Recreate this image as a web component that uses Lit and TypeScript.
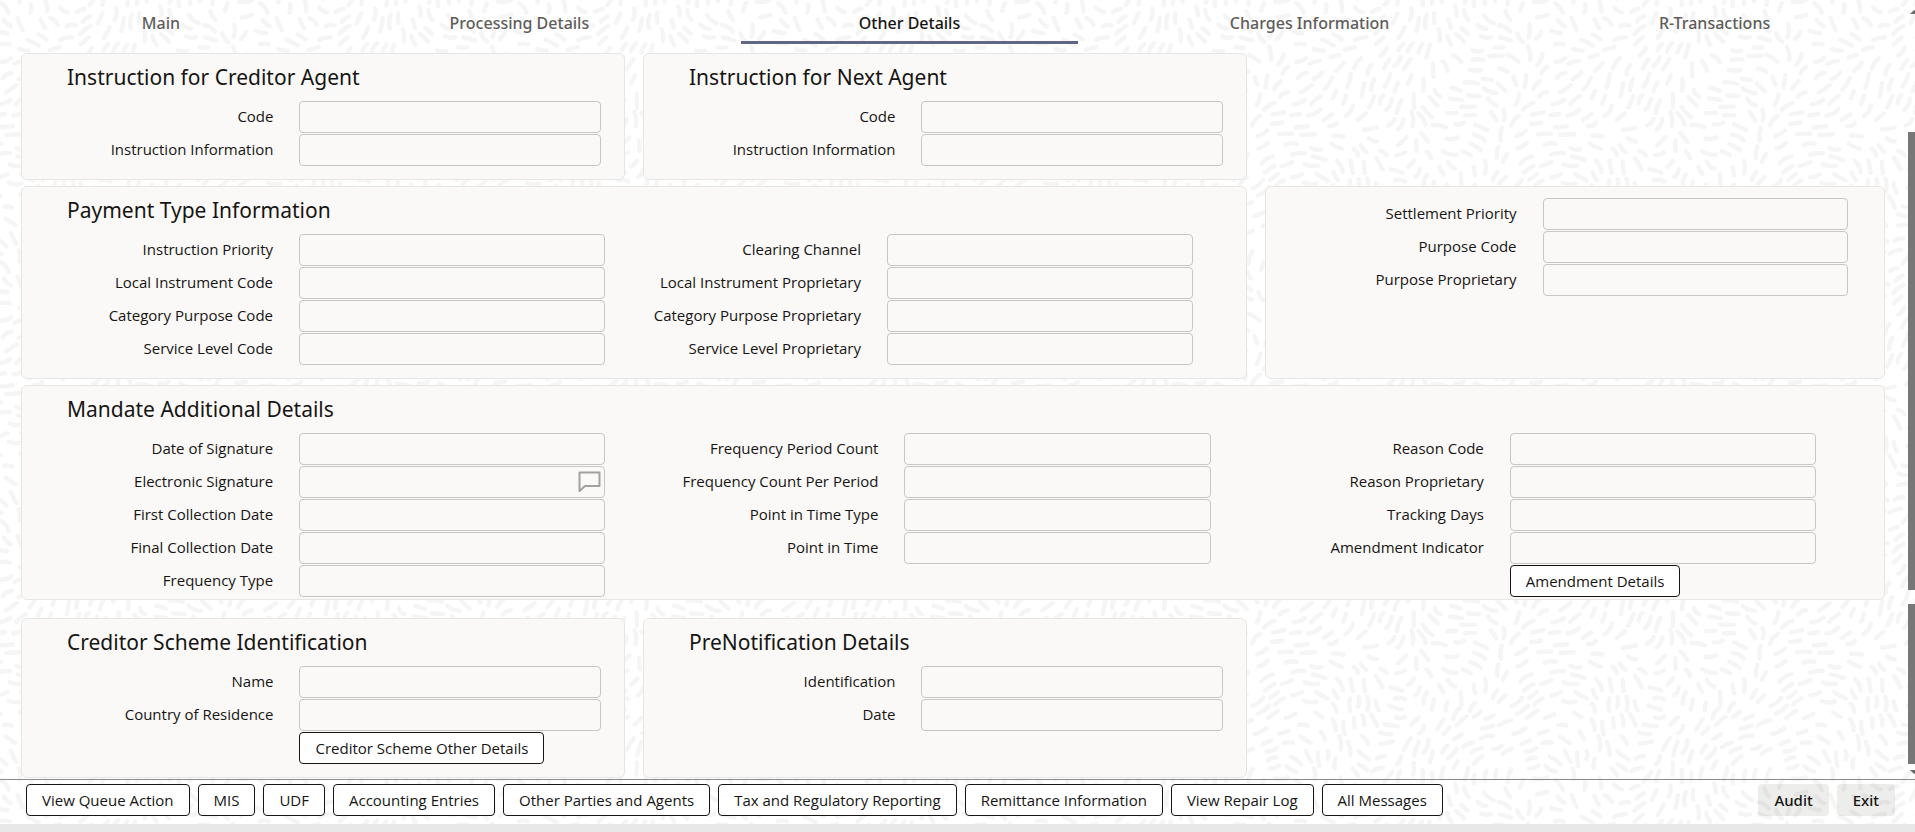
import { LitElement, html, css, unsafeCSS, nothing } from 'lit';
import { customElement, property, state } from 'lit/decorators.js';

/* Seamless tile of short brush strokes that follow a periodic flow field. */
function strokeTile(size: number): string {
  let seed = 1207;
  const rnd = () => {
    seed = (seed * 1664525 + 1013904223) >>> 0;
    return seed / 4294967296;
  };
  const k = (2 * Math.PI) / size;
  const angle = (x: number, y: number) =>
    -0.8 + 1.3 * Math.sin(k * x + 0.6) + 0.8 * Math.cos(k * y + 1.1) + 0.6 * Math.sin(k * (2 * x + y)) + 0.4 * Math.cos(k * (x - 2 * y));
  const wrap = (d: number) => d - size * Math.round(d / size);
  const placed: { x: number; y: number; a: number }[] = [];
  for (let i = 0; i < 24000; i++) {
    const x = rnd() * size;
    const y = rnd() * size;
    const a = angle(x, y);
    const clear = placed.every((p) => {
      const dx = wrap(x - p.x);
      const dy = wrap(y - p.y);
      return [a, p.a].every((t) => {
        const u = (dx * Math.cos(t) + dy * Math.sin(t)) / 18;
        const v = (-dx * Math.sin(t) + dy * Math.cos(t)) / 8;
        return u * u + v * v > 1;
      });
    });
    if (clear) placed.push({ x, y, a });
  }
  let d = '';
  for (const p of placed) {
    const len = 4 + rnd() * 3;
    const bend = (rnd() - 0.5) * 5;
    const c = Math.cos(p.a);
    const s = Math.sin(p.a);
    for (const ox of [-size, 0, size]) {
      for (const oy of [-size, 0, size]) {
        const x = p.x + ox;
        const y = p.y + oy;
        if (x < -12 || y < -12 || x > size + 12 || y > size + 12) continue;
        d += `M${(x - c * len).toFixed(1)} ${(y - s * len).toFixed(1)}Q${(x - s * bend).toFixed(1)} ${(y + c * bend).toFixed(1)} ${(x + c * len).toFixed(1)} ${(y + s * len).toFixed(1)}`;
      }
    }
  }
  const svg = `<svg xmlns="http://www.w3.org/2000/svg" width="${size}" height="${size}"><path d="${d}" fill="none" stroke="#f5f5f5" stroke-width="4.4" stroke-linecap="round"/></svg>`;
  return `url("data:image/svg+xml,${encodeURIComponent(svg)}")`;
}

const controls = css`
  button {
    font: 400 15px/20px 'Open Sans', 'Noto Sans', sans-serif;
    color: #161513;
    height: 32px;
    padding: 0 15px;
    border: 1px solid #161513;
    border-radius: 4px;
    background: #fff;
    white-space: nowrap;
    cursor: pointer;
  }
`;

interface Field {
  label: string;
  note?: boolean;
}

@customElement('field-column')
class FieldColumn extends LitElement {
  @property({ attribute: false }) fields: Field[] = [];
  @property() action = '';

  static styles = [
    controls,
    css`
      :host {
        display: flex;
        flex-direction: column;
        gap: 1px;
        min-width: 0;
      }
      .row {
        display: grid;
        grid-template-columns: minmax(0, 251fr) minmax(0, var(--input-share, 306fr));
        column-gap: 26px;
        align-items: center;
      }
      label {
        padding-bottom: 2px;
        font: 400 15px/20px 'Open Sans', 'Noto Sans', sans-serif;
        color: #161513;
        text-align: right;
        white-space: nowrap;
        justify-self: end;
      }
      .box {
        position: relative;
        display: flex;
      }
      input {
        box-sizing: border-box;
        width: 100%;
        height: 32px;
        padding: 0 12px;
        border: 1px solid #c8c7c5;
        border-radius: 4px;
        background: transparent;
        font: 400 15px/20px 'Open Sans', 'Noto Sans', sans-serif;
        color: #161513;
      }
      .note {
        position: absolute;
        top: 4px;
        right: 4px;
        width: 24px;
        height: 24px;
        padding: 0;
        border: 0;
        background: none;
      }
      .note svg {
        display: block;
      }
      .row > button {
        grid-column: 2;
        justify-self: start;
      }
    `,
  ];

  render() {
    return html`
      ${this.fields.map(
        (f, i) => html`
          <div class="row">
            <label for="f${i}">${f.label}</label>
            <div class="box">
              <input id="f${i}" type="text" />
              ${f.note
                ? html`<button class="note" aria-label="Open note">
                    <svg width="24" height="24" viewBox="0 0 24 24" fill="none" stroke="#a3a09d" stroke-width="2" stroke-linejoin="round">
                      <path d="M2.5 2.5h20v13.5h-14.500l-5.500 5z" />
                    </svg>
                  </button>`
                : nothing}
            </div>
          </div>
        `,
      )}
      ${this.action ? html`<div class="row"><button>${this.action}</button></div>` : nothing}
    `;
  }
}

const list = (...labels: string[]): Field[] => labels.map((label) => ({ label }));

@customElement('app-root')
class AppRoot extends LitElement {
  @state() private tab = 'Other Details';

  private tabs = ['Main', 'Processing Details', 'Other Details', 'Charges Information', 'R-Transactions'];
  private links = [
    'View Queue Action',
    'MIS',
    'UDF',
    'Accounting Entries',
    'Other Parties and Agents',
    'Tax and Regulatory Reporting',
    'Remittance Information',
    'View Repair Log',
    'All Messages',
  ];

  static styles = [
    controls,
    css`
      :host {
        display: flex;
        flex-direction: column;
        min-height: 100vh;
        font-family: 'Open Sans', 'Noto Sans', sans-serif;
        color: #161513;
        background: #fff ${unsafeCSS(strokeTile(259))};
      }
      .body {
        flex: 1;
        display: flex;
      }
      .content {
        flex: 1;
        min-width: 0;
      }
      .tabs {
        display: flex;
        gap: 34px;
        padding: 0 20px 0 24px;
        margin-bottom: 9px;
      }
      .tab {
        flex: 1 1 auto;
        height: auto;
        padding: 5px 0 0;
        border: 0;
        border-bottom: 3px solid transparent;
        border-radius: 0;
        background: none;
        font: 500 16px/36px 'Noto Sans', sans-serif;
        color: #5f5d5a;
      }
      .tab[aria-selected='true'] {
        color: #161513;
        border-bottom-color: #5f6785;
      }
      .grid {
        display: grid;
        grid-template-columns: 604fr 604fr 620fr;
        gap: 6px 18px;
        padding: 0 23px 1px 21px;
      }
      .card {
        --input-share: 301fr;
        padding: 9px 23px 13px 0;
        border: 1px solid #e8e6e4;
        border-radius: 6px;
        background: #fbf9f8;
      }
      .half,
      .side,
      .full {
        --input-share: 306fr;
      }
      .half {
        grid-column: 1 / span 2;
        padding-right: 48px;
      }
      .side {
        padding: 11px 36px 13px 0;
      }
      .full {
        grid-column: 1 / -1;
        padding-right: 46px;
        padding-bottom: 2px;
      }
      .start {
        grid-column: 1;
      }
      .last {
        margin-top: 12px;
      }
      h2 {
        margin: 0 0 10px;
        padding-left: 45px;
        font: 400 21px/28px 'Noto Sans', sans-serif;
      }
      .cols {
        display: grid;
      }
      .two {
        grid-template-columns: repeat(2, minmax(0, 1fr));
      }
      .two field-column {
        padding-right: 5px;
      }
      .three {
        grid-template-columns: repeat(3, minmax(0, 1fr));
      }
      .three field-column {
        padding-right: 22px;
      }
      .rail {
        width: 7px;
        display: flex;
        flex-direction: column;
        overflow: hidden;
      }
      .arrow {
        flex: none;
        width: 0;
        margin-left: 2px;
        border: solid transparent;
        border-width: 0 4px;
      }
      .up {
        margin-top: 10px;
        margin-bottom: 118px;
        border-bottom: 4px solid #6b6b6b;
      }
      .down {
        margin-top: 6px;
        margin-bottom: 5px;
        border-top: 4px solid #6b6b6b;
      }
      .thumb {
        flex: 459 1 0;
        background: #777;
      }
      .thumb + .thumb {
        flex-grow: 160;
        margin-top: 14px;
      }
      footer {
        display: flex;
        gap: 8px;
        padding: 4px 20px 8px 26px;
        border-top: 1px solid #8b8b8b;
        border-bottom: 8px solid #e8e8e8;
      }
      .plain {
        border-color: transparent;
        background: rgba(22, 21, 19, 0.08) border-box;
        font-family: 'Noto Sans', sans-serif;
        font-weight: 500;
      }
      .push {
        margin-left: auto;
      }
    `,
  ];

  render() {
    return html`
      <div class="body">
        <div class="content">
          <nav class="tabs" role="tablist">
            ${this.tabs.map(
              (t) => html`<button class="tab" role="tab" aria-selected=${this.tab === t ? 'true' : 'false'} @click=${() => (this.tab = t)}>${t}</button>`,
            )}
          </nav>
          <main class="grid">
            <section class="card">
              <h2>Instruction for Creditor Agent</h2>
              <field-column .fields=${list('Code', 'Instruction Information')}></field-column>
            </section>
            <section class="card">
              <h2>Instruction for Next Agent</h2>
              <field-column .fields=${list('Code', 'Instruction Information')}></field-column>
            </section>
            <section class="card half">
              <h2>Payment Type Information</h2>
              <div class="cols two">
                <field-column
                  .fields=${list('Instruction Priority', 'Local Instrument Code', 'Category Purpose Code', 'Service Level Code')}
                ></field-column>
                <field-column
                  .fields=${list('Clearing Channel', 'Local Instrument Proprietary', 'Category Purpose Proprietary', 'Service Level Proprietary')}
                ></field-column>
              </div>
            </section>
            <section class="card side">
              <field-column .fields=${list('Settlement Priority', 'Purpose Code', 'Purpose Proprietary')}></field-column>
            </section>
            <section class="card full">
              <h2>Mandate Additional Details</h2>
              <div class="cols three">
                <field-column
                  .fields=${[
                    { label: 'Date of Signature' },
                    { label: 'Electronic Signature', note: true },
                    ...list('First Collection Date', 'Final Collection Date', 'Frequency Type'),
                  ]}
                ></field-column>
                <field-column
                  .fields=${list('Frequency Period Count', 'Frequency Count Per Period', 'Point in Time Type', 'Point in Time')}
                ></field-column>
                <field-column
                  .fields=${list('Reason Code', 'Reason Proprietary', 'Tracking Days', 'Amendment Indicator')}
                  action="Amendment Details"
                ></field-column>
              </div>
            </section>
            <section class="card start last">
              <h2>Creditor Scheme Identification</h2>
              <field-column .fields=${list('Name', 'Country of Residence')} action="Creditor Scheme Other Details"></field-column>
            </section>
            <section class="card last">
              <h2>PreNotification Details</h2>
              <field-column .fields=${list('Identification', 'Date')}></field-column>
            </section>
          </main>
        </div>
        <div class="rail" aria-hidden="true">
          <div class="arrow up"></div>
          <div class="thumb"></div>
          <div class="thumb"></div>
          <div class="arrow down"></div>
        </div>
      </div>
      <footer>
        ${this.links.map((l) => html`<button>${l}</button>`)}
        <button class="plain push">Audit</button>
        <button class="plain">Exit</button>
      </footer>
    `;
  }
}
